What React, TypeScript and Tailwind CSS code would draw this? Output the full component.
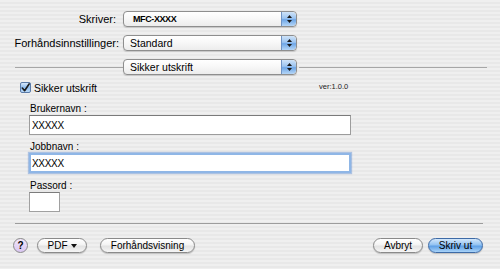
import React from 'react';

const Stepper: React.FC = () => (
  <div className="w-[15px] h-full rounded-r-[4px] border-l border-[#6f93c4] bg-[linear-gradient(180deg,#cfe3f8_0%,#9cc4f0_45%,#6ea6e6_55%,#b5d6f7_100%)] flex flex-col items-center justify-center gap-[2px]">
    <svg width="5" height="3" viewBox="0 0 5 3"><path d="M2.5 0 L5 3 L0 3 Z" fill="#1a1a1a" /></svg>
    <svg width="5" height="3" viewBox="0 0 5 3"><path d="M0 0 L5 0 L2.5 3 Z" fill="#1a1a1a" /></svg>
  </div>
);

const Popup: React.FC<{ children: React.ReactNode; textClass?: string }> = ({ children, textClass = 'pl-[6px] text-[10.5px]' }) => (
  <div className="w-[174px] h-[16px] flex rounded-[4px] border border-[#8e8e8e] bg-[linear-gradient(180deg,#ffffff_0%,#f7f7f7_50%,#ececec_100%)] shadow-[0_1px_1px_rgba(0,0,0,0.15)] overflow-hidden">
    <div className={`flex-1 flex items-center text-black leading-none ${textClass}`}>{children}</div>
    <Stepper />
  </div>
);

const PillButton: React.FC<{ children: React.ReactNode; className?: string; blue?: boolean }> = ({ children, className = '', blue }) => (
  <div
    className={`h-[15px] rounded-full border flex items-center justify-center text-[10px] leading-none text-black shadow-[0_1px_1px_rgba(0,0,0,0.2)] ${
      blue
        ? 'border-[#3d6aa6] bg-[linear-gradient(180deg,#d3e7fb_0%,#93c3f2_45%,#5fa0e6_55%,#a9d3f8_100%)]'
        : 'border-[#8a8a8a] bg-[linear-gradient(180deg,#ffffff_0%,#f4f4f4_45%,#e2e2e2_55%,#f6f6f6_100%)]'
    } ${className}`}
  >
    {children}
  </div>
);

export default function App() {
  return (
    <div className="w-[500px] h-[269px] overflow-hidden flex flex-col font-['Liberation_Sans',Arial,sans-serif] bg-[repeating-linear-gradient(180deg,#efefef_0px,#efefef_2px,#e8e8e8_2px,#e8e8e8_4px)]">
      {/* header popups */}
      <div className="pt-[11px] flex flex-col gap-[8px]">
        <div className="flex items-center h-[16px]">
          <div className="w-[116px] text-right text-[11px] text-black leading-none">Skriver:</div>
          <div className="ml-[7px]">
            <Popup textClass="pl-[9px] text-[9px] font-bold tracking-[-0.4px]">MFC-XXXX</Popup>
          </div>
        </div>
        <div className="flex items-center h-[16px]">
          <div className="w-[119px] text-right text-[11px] text-black leading-none whitespace-nowrap">Forhåndsinnstillinger:</div>
          <div className="ml-[4px]">
            <Popup>Standard</Popup>
          </div>
        </div>
        <div className="flex items-center h-[16px]">
          <div className="ml-[15px] w-[108px] h-px bg-[#a6a6a6]" />
          <Popup>Sikker utskrift</Popup>
          <div className="ml-[2px] w-[188px] h-px bg-[#a6a6a6]" />
        </div>
      </div>

      {/* pane */}
      <div className="mt-[7px] pl-[20px]">
        <div className="flex items-start h-[12px]">
          <div className="w-[11px] h-[11px] rounded-[2px] border border-[#5a7ba8] bg-[linear-gradient(180deg,#d6e8fa_0%,#8fbdee_50%,#b8d8f7_100%)] flex items-center justify-center">
            <svg width="10" height="10" viewBox="0 0 10 10">
              <path d="M1.5 5 L4 8 L9 0.5" fill="none" stroke="#1b1b1b" strokeWidth="1.8" strokeLinecap="round" strokeLinejoin="round" />
            </svg>
          </div>
          <div className="ml-[3px] text-[10.5px] leading-[12px] text-black">Sikker utskrift</div>
          <div className="ml-[222px] mt-[1px] text-[7.5px] leading-none text-[#222]">ver:1.0.0</div>
        </div>

        <div className="pl-[9px]">
          <div className="mt-[8px] h-[13px] text-[10px] leading-[13px] text-black pl-[1px]">Brukernavn :</div>
          <div className="w-[322px] h-[20px] bg-white border border-[#9c9c9c] border-t-[#7a7a7a] flex items-center pl-[2px] text-[10px] tracking-[-0.3px] text-black">XXXXX</div>

          <div className="mt-[5px] h-[13px] text-[10px] leading-[13px] text-black pl-[1px]">Jobbnavn :</div>
          <div className="w-[322px] h-[20px] bg-white border-2 border-[#8fb6e6] shadow-[0_0_1px_1px_rgba(90,140,210,0.45)] flex items-center pl-[1px] text-[10px] tracking-[-0.3px] text-black">XXXXX</div>

          <div className="mt-[6px] h-[13px] text-[10px] leading-[13px] text-black pl-[1px]">Passord :</div>
          <div className="w-[31px] h-[20px] bg-white border border-[#a0a0a0] border-t-[#7c7c7c]" />
        </div>
      </div>

      {/* footer */}
      <div className="mt-[11px] ml-[15px] w-[468px] h-px bg-[#9c9c9c]" />
      <div className="mt-[14px] flex items-center h-[15px]">
        <div className="ml-[13px] w-[15px] h-[15px] rounded-full border border-[#8a8a8a] bg-[linear-gradient(180deg,#f1e6fb_0%,#d9c6f1_100%)] flex items-center justify-center text-[10px] font-bold text-black leading-none">?</div>
        <PillButton className="ml-[9px] w-[50px]">
          <span>PDF</span>
          <svg className="ml-[3px]" width="6" height="4" viewBox="0 0 6 4"><path d="M0 0 L6 0 L3 4 Z" fill="#111" /></svg>
        </PillButton>
        <PillButton className="ml-[13px] w-[95px]">Forhåndsvisning</PillButton>
        <PillButton className="ml-[178px] w-[50px]">Avbryt</PillButton>
        <PillButton blue className="ml-[5px] w-[55px]">Skriv ut</PillButton>
      </div>
    </div>
  );
}
